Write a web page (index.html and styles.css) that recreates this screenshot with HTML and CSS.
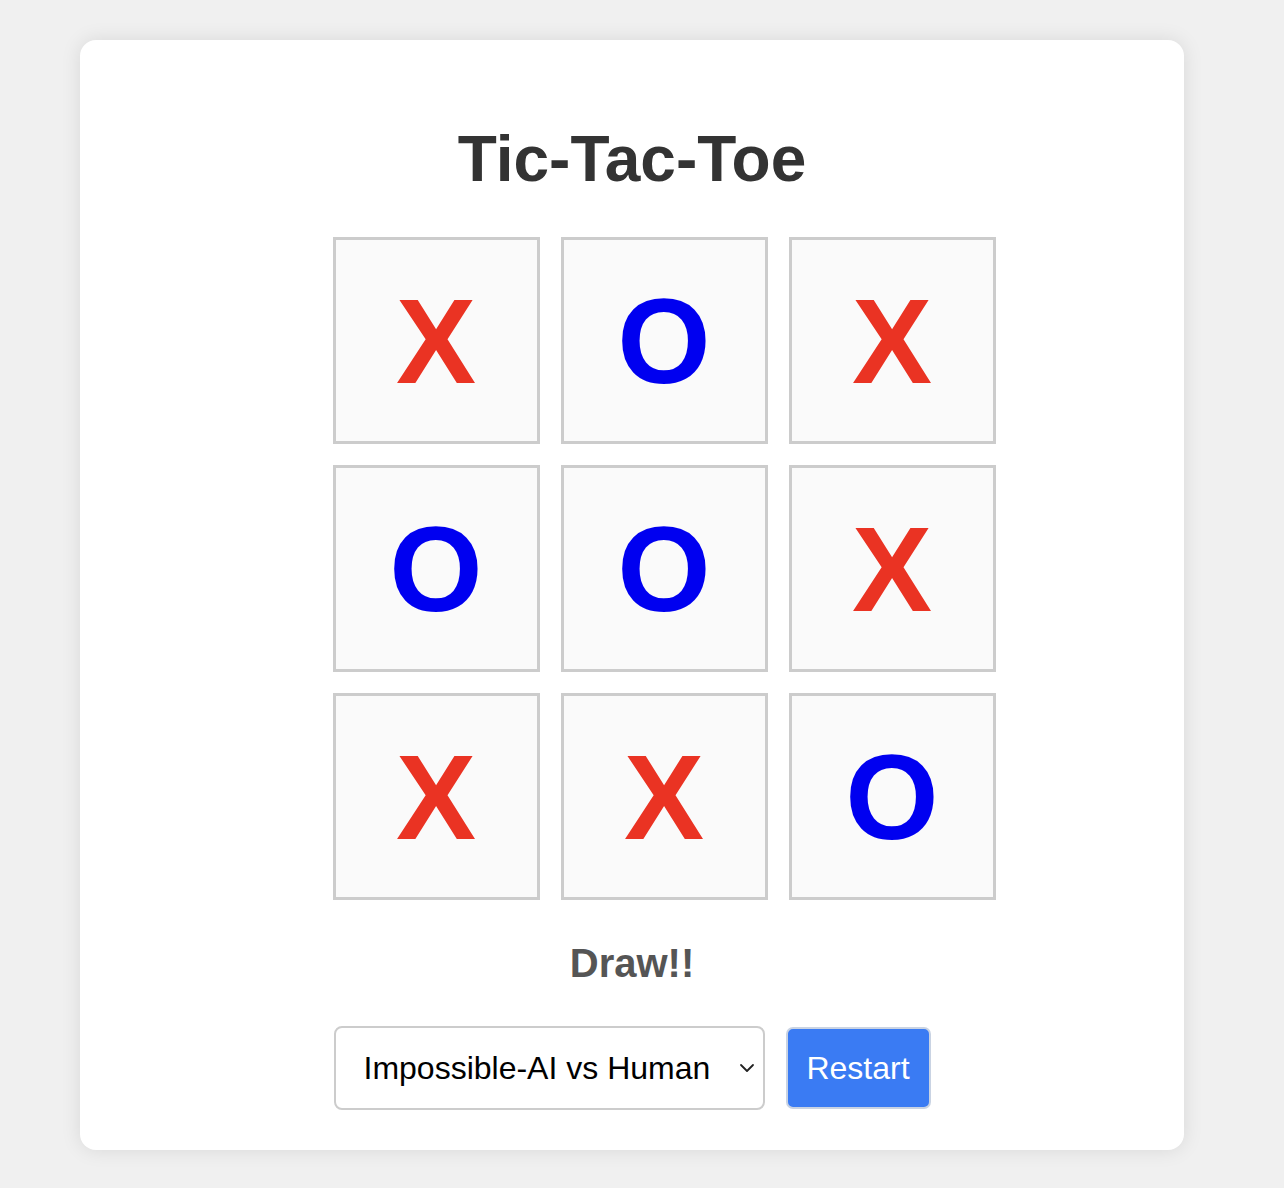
FILE: index.html
```html
<!DOCTYPE html>
<html lang="en">
<head>
<meta charset="utf-8">
<title>Tic-Tac-Toe</title>
<link rel="stylesheet" href="styles.css">
</head>
<body>
  <main class="card">
    <h1 class="title">Tic-Tac-Toe</h1>
    <div class="board-wrap">
      <div class="board">
        <div class="cell x">X</div>
        <div class="cell o">O</div>
        <div class="cell x">X</div>
        <div class="cell o">O</div>
        <div class="cell o">O</div>
        <div class="cell x">X</div>
        <div class="cell x">X</div>
        <div class="cell x">X</div>
        <div class="cell o">O</div>
      </div>
    </div>
    <div class="status">Draw!!</div>
    <div class="controls">
      <div class="select-wrap">
        <select class="mode">
          <option>Impossible-AI vs Human</option>
          <option>Human vs Human</option>
        </select>
        <svg class="chevron" width="16" height="10" viewBox="0 0 16 10" aria-hidden="true"><polyline points="2,2 8,8 14,2" fill="none" stroke="#222" stroke-width="1.8" stroke-linecap="round" stroke-linejoin="round"/></svg>
      </div>
      <button class="restart">Restart</button>
    </div>
  </main>
</body>
</html>
```

FILE: styles.css
```css
html, body {
  margin: 0;
  padding: 0;
}
body {
  background: #f0f0f0;
  font-family: "Liberation Sans", Arial, Helvetica, sans-serif;
  padding: 40px 100px 38px 80px;
}
.card {
  background: #ffffff;
  border-radius: 16px;
  box-shadow: 0 0 20px rgba(0, 0, 0, 0.1);
  padding: 40px 0 40px;
  display: flex;
  flex-direction: column;
  align-items: center;
}
.title {
  margin: 42px 0 41px;
  font-size: 64px;
  line-height: 74px;
  font-weight: 700;
  color: #333333;
}
.board-wrap {
  align-self: stretch;
  display: flex;
  justify-content: center;
  padding-left: 64px;
}
.board {
  display: grid;
  grid-template-columns: repeat(3, 207px);
  grid-template-rows: repeat(3, 207px);
  gap: 21px;
}
.cell {
  box-sizing: border-box;
  border: 3px solid #cccccc;
  background: #fafafa;
  display: flex;
  align-items: center;
  justify-content: center;
  font-size: 120px;
  font-weight: 700;
  line-height: 1;
}
.cell.x { color: #ea3323; }
.cell.o { color: #0000f0; }
.status {
  margin-top: 40px;
  font-size: 40px;
  line-height: 46px;
  font-weight: 700;
  color: #555555;
}
.controls {
  margin-top: 40px;
  display: flex;
  align-items: center;
  gap: 21px;
}
.select-wrap {
  position: relative;
}
.mode {
  -webkit-appearance: none;
  appearance: none;
  box-sizing: border-box;
  width: 431px;
  height: 84px;
  border: 2px solid #cccccc;
  border-radius: 8px;
  background: #ffffff;
  color: #000000;
  font-family: "Liberation Sans", Arial, Helvetica, sans-serif;
  font-size: 32px;
  padding: 0 40px 0 28px;
}
.chevron {
  position: absolute;
  right: 10px;
  top: 37px;
  pointer-events: none;
}
.restart {
  box-sizing: border-box;
  width: 145px;
  height: 82px;
  padding: 0;
  border: 2px solid #c9d3e3;
  border-radius: 7px;
  background: #3a7bf3;
  color: #ffffff;
  font-family: "Liberation Sans", Arial, Helvetica, sans-serif;
  font-size: 32px;
}
```
